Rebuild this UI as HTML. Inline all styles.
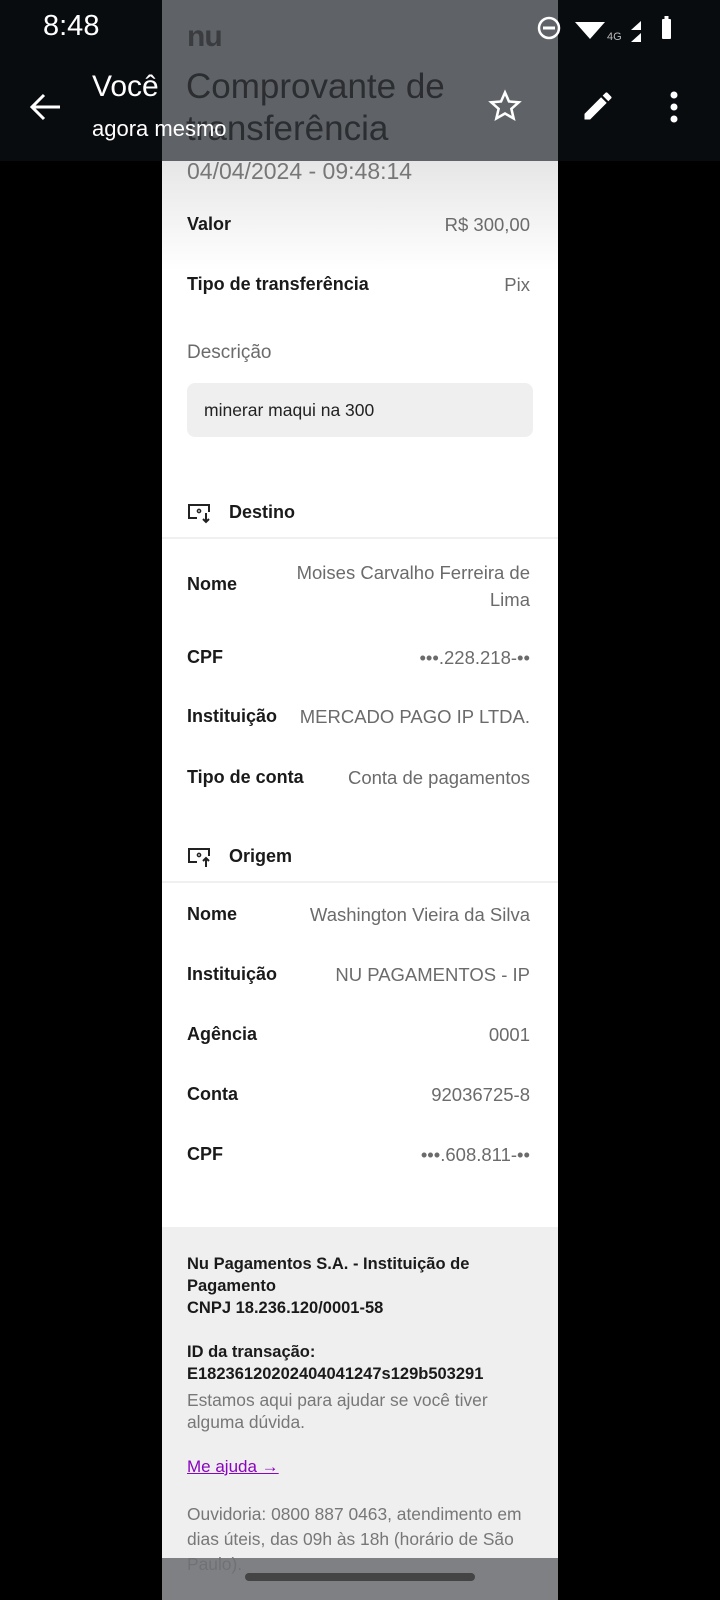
<!DOCTYPE html>
<html><head><meta charset="utf-8"><style>
*{margin:0;padding:0;box-sizing:border-box}
body{width:720px;height:1600px;background:#000;position:relative;overflow:hidden;font-family:"Liberation Sans",sans-serif}
.col{position:absolute;left:162px;top:0;width:396px;height:1600px;background:#fff}
.fade{position:absolute;left:162px;top:161px;width:396px;height:110px;background:linear-gradient(#e6e6e6,#fff)}
.t{position:absolute;white-space:nowrap;font-size:18.5px}
.l{left:187px;color:#1a1a1a;font-weight:bold;font-size:18px}
.v{right:190px;color:#6b6b6b;text-align:right}
.div{position:absolute;left:162px;width:396px;height:2px;background:#f0f0f0}
.foot{position:absolute;left:162px;top:1227px;width:396px;height:373px;background:#efefef}
.f{position:absolute;left:187px;font-size:16.5px;white-space:nowrap}
.fb{color:#1a1a1a;font-weight:bold}
.fg{color:#777;font-size:17.4px}
</style></head><body>
<div class="col"></div>
<div class="fade"></div>
<div class="t" style="left:187px;top:158px;font-size:23px;color:#777">04/04/2024 - 09:48:14</div>
<div class="t l" style="top:214px">Valor</div><div class="t v" style="top:214px">R$ 300,00</div>
<div class="t l" style="top:274px">Tipo de transferência</div><div class="t v" style="top:274px">Pix</div>
<div class="t" style="left:187px;top:342px;color:#6b6b6b;font-size:19px">Descrição</div>
<div style="position:absolute;left:187px;top:383px;width:346px;height:54px;background:#efefef;border-radius:8px"></div>
<div class="t" style="left:204px;top:400px;font-size:17.5px;color:#222">minerar maqui na 300</div>

<svg style="position:absolute;left:187px;top:503px" width="26" height="22" viewBox="0 0 26 22" fill="none" stroke="#222" stroke-width="2"><path d="M10 15H2V2h20v7"/><circle cx="12" cy="8" r="1.6" stroke-width="1.5"/><path d="M19 10v9M16 16l3 3 3-3"/></svg>
<div class="t" style="left:229px;top:502px;font-weight:bold;color:#1a1a1a;font-size:18px">Destino</div>
<div class="div" style="top:537px"></div>
<div class="t l" style="top:574px">Nome</div>
<div class="t v" style="top:559px;line-height:27px">Moises Carvalho Ferreira de<br>Lima</div>
<div class="t l" style="top:647px">CPF</div><div class="t v" style="top:647px">•••.228.218-••</div>
<div class="t l" style="top:706px">Instituição</div><div class="t v" style="top:706px">MERCADO PAGO IP LTDA.</div>
<div class="t l" style="top:767px">Tipo de conta</div><div class="t v" style="top:767px">Conta de pagamentos</div>

<svg style="position:absolute;left:187px;top:847px" width="26" height="22" viewBox="0 0 26 22" fill="none" stroke="#222" stroke-width="2"><path d="M10 15H2V2h20v7"/><circle cx="12" cy="8" r="1.6" stroke-width="1.5"/><path d="M19 20v-9M16 14l3-3 3 3"/></svg>
<div class="t" style="left:229px;top:846px;font-weight:bold;color:#1a1a1a;font-size:18px">Origem</div>
<div class="div" style="top:881px"></div>
<div class="t l" style="top:904px">Nome</div><div class="t v" style="top:904px">Washington Vieira da Silva</div>
<div class="t l" style="top:964px">Instituição</div><div class="t v" style="top:964px">NU PAGAMENTOS - IP</div>
<div class="t l" style="top:1024px">Agência</div><div class="t v" style="top:1024px">0001</div>
<div class="t l" style="top:1084px">Conta</div><div class="t v" style="top:1084px">92036725-8</div>
<div class="t l" style="top:1144px">CPF</div><div class="t v" style="top:1144px">•••.608.811-••</div>

<div class="foot"></div>
<div class="f fb" style="top:1253px;line-height:22px">Nu Pagamentos S.A. - Instituição de<br>Pagamento<br>CNPJ 18.236.120/0001-58</div>
<div class="f fb" style="top:1341px;line-height:22px">ID da transação:<br>E18236120202404041247s129b503291</div>
<div class="f fg" style="top:1389px;line-height:22px">Estamos aqui para ajudar se você tiver<br>alguma dúvida.</div>
<div class="f" style="top:1457px;color:#8a05be;text-decoration:underline;font-size:17px">Me ajuda →</div>
<div class="f fg" style="top:1502px;line-height:25px">Ouvidoria: 0800 887 0463, atendimento em<br>dias úteis, das 09h às 18h (horário de São<br>Paulo).</div>

<div style="position:absolute;left:0;top:1558px;width:162px;height:42px;background:#000"></div>
<div style="position:absolute;left:558px;top:1558px;width:162px;height:42px;background:#000"></div>
<div style="position:absolute;left:162px;top:1558px;width:396px;height:42px;background:rgba(110,113,116,0.88)"></div>
<div style="position:absolute;left:245px;top:1573px;width:230px;height:8px;border-radius:4px;background:#444"></div>

<div style="position:absolute;left:0;top:0;width:720px;height:161px;background:#090c0f"></div>
<div style="position:absolute;left:162px;top:0;width:396px;height:161px;background:#5f6367"></div>
<div class="t" style="left:187px;top:20px;font-size:30px;font-weight:bold;color:#3a3c3f;letter-spacing:-1px">nu</div>
<div class="t" style="left:186px;top:66px;font-size:35px;color:#2b2d30;line-height:42px">Comprovante de<br>transferência</div>
<div class="t" style="left:43px;top:10px;font-size:29px;color:#fff">8:48</div>
<svg style="position:absolute;left:535px;top:16px" width="140" height="30" viewBox="0 0 140 30" fill="#fff"><circle cx="14" cy="12" r="10" fill="none" stroke="#fff" stroke-width="2.5"/><rect x="8" y="10.5" width="12" height="3"/><path d="M40 6h30l-15 17z"/><text x="72" y="24" font-size="11" fill="#bbb" font-family="Liberation Sans">4G</text><path d="M96 14l10-9v9zM96 26l10-9v9z"/><rect x="127" y="3" width="9" height="20" rx="1"/><rect x="129.5" y="0" width="4" height="3"/></svg>
<svg style="position:absolute;left:28px;top:92px" width="34" height="30" viewBox="0 0 34 30" fill="none" stroke="#fff" stroke-width="3"><path d="M32 15H4M16 3L4 15l12 12"/></svg>
<div class="t" style="left:92px;top:70px;font-size:30px;color:#fff">Você</div>
<div class="t" style="left:92px;top:116px;font-size:22px;color:#fff">agora mesmo</div>
<svg style="position:absolute;left:488px;top:89px" width="34" height="34" viewBox="0 0 24 24" fill="none" stroke="#fff" stroke-width="1.8"><path d="M12 2.5l2.8 6.3 6.9.6-5.2 4.6 1.6 6.8L12 17.3l-6.1 3.5 1.6-6.8L2.3 9.4l6.9-.6z"/></svg>
<svg style="position:absolute;left:580px;top:88px" width="36" height="36" viewBox="0 0 24 24" fill="#fff"><path d="M3 17.25V21h3.75L17.8 9.94l-3.75-3.75zM20.7 7.04a1 1 0 000-1.41l-2.34-2.34a1 1 0 00-1.41 0l-1.83 1.83 3.75 3.75z"/></svg>
<svg style="position:absolute;left:668px;top:90px" width="12" height="34" viewBox="0 0 12 34" fill="#fff"><circle cx="6" cy="5" r="3.5"/><circle cx="6" cy="17" r="3.5"/><circle cx="6" cy="29" r="3.5"/></svg>
</body></html>
